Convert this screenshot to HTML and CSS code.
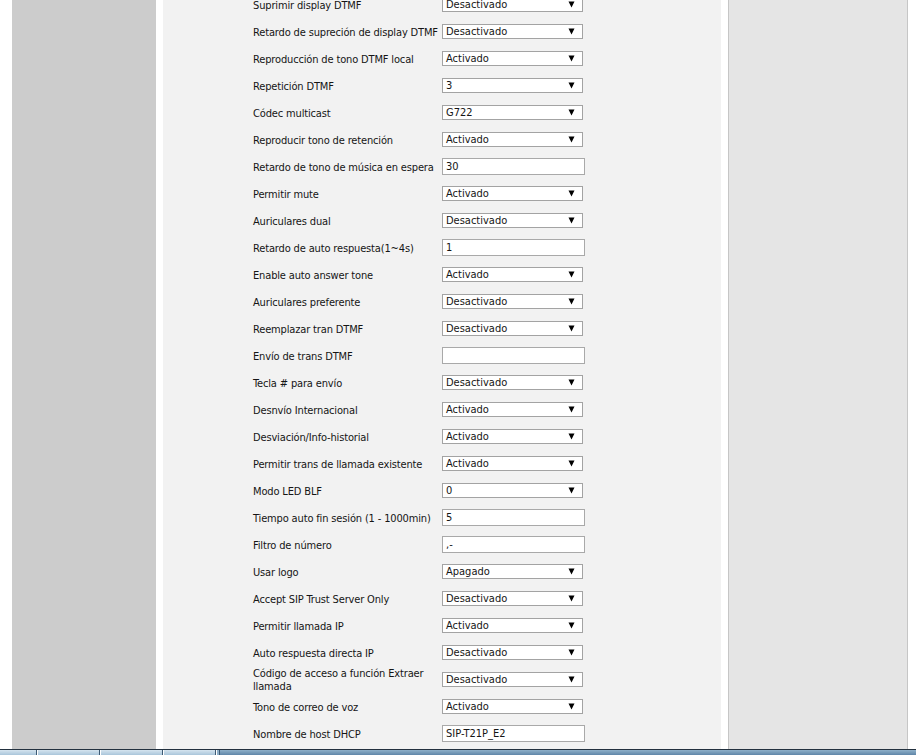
FILE: index.html
```html
<!DOCTYPE html>
<html lang="es">
<head>
<meta charset="utf-8">
<title>Configuración</title>
<link rel="stylesheet" href="styles.css">
</head>
<body>
<div class="page">
  <div class="sidebar"></div>
  <div class="main">
    <div class="form">
      <div class="row"><div class="label">Suprimir display DTMF</div><div class="select"><span>Desactivado</span><svg class="arrow" width="7" height="7" viewBox="0 0 7 7"><path d="M0.5 0.5h6L3.5 6.5z"/></svg></div></div>
      <div class="row"><div class="label">Retardo de supreción de display DTMF</div><div class="select"><span>Desactivado</span><svg class="arrow" width="7" height="7" viewBox="0 0 7 7"><path d="M0.5 0.5h6L3.5 6.5z"/></svg></div></div>
      <div class="row"><div class="label">Reproducción de tono DTMF local</div><div class="select"><span>Activado</span><svg class="arrow" width="7" height="7" viewBox="0 0 7 7"><path d="M0.5 0.5h6L3.5 6.5z"/></svg></div></div>
      <div class="row"><div class="label">Repetición DTMF</div><div class="select"><span>3</span><svg class="arrow" width="7" height="7" viewBox="0 0 7 7"><path d="M0.5 0.5h6L3.5 6.5z"/></svg></div></div>
      <div class="row"><div class="label">Códec multicast</div><div class="select"><span>G722</span><svg class="arrow" width="7" height="7" viewBox="0 0 7 7"><path d="M0.5 0.5h6L3.5 6.5z"/></svg></div></div>
      <div class="row"><div class="label">Reproducir tono de retención</div><div class="select"><span>Activado</span><svg class="arrow" width="7" height="7" viewBox="0 0 7 7"><path d="M0.5 0.5h6L3.5 6.5z"/></svg></div></div>
      <div class="row"><div class="label">Retardo de tono de música en espera</div><div class="input">30</div></div>
      <div class="row"><div class="label">Permitir mute</div><div class="select"><span>Activado</span><svg class="arrow" width="7" height="7" viewBox="0 0 7 7"><path d="M0.5 0.5h6L3.5 6.5z"/></svg></div></div>
      <div class="row"><div class="label">Auriculares dual</div><div class="select"><span>Desactivado</span><svg class="arrow" width="7" height="7" viewBox="0 0 7 7"><path d="M0.5 0.5h6L3.5 6.5z"/></svg></div></div>
      <div class="row"><div class="label">Retardo de auto respuesta(1~4s)</div><div class="input">1</div></div>
      <div class="row"><div class="label">Enable auto answer tone</div><div class="select"><span>Activado</span><svg class="arrow" width="7" height="7" viewBox="0 0 7 7"><path d="M0.5 0.5h6L3.5 6.5z"/></svg></div></div>
      <div class="row"><div class="label">Auriculares preferente</div><div class="select"><span>Desactivado</span><svg class="arrow" width="7" height="7" viewBox="0 0 7 7"><path d="M0.5 0.5h6L3.5 6.5z"/></svg></div></div>
      <div class="row"><div class="label">Reemplazar tran DTMF</div><div class="select"><span>Desactivado</span><svg class="arrow" width="7" height="7" viewBox="0 0 7 7"><path d="M0.5 0.5h6L3.5 6.5z"/></svg></div></div>
      <div class="row"><div class="label">Envío de trans DTMF</div><div class="input"></div></div>
      <div class="row"><div class="label">Tecla # para envío</div><div class="select"><span>Desactivado</span><svg class="arrow" width="7" height="7" viewBox="0 0 7 7"><path d="M0.5 0.5h6L3.5 6.5z"/></svg></div></div>
      <div class="row"><div class="label">Desnvío Internacional</div><div class="select"><span>Activado</span><svg class="arrow" width="7" height="7" viewBox="0 0 7 7"><path d="M0.5 0.5h6L3.5 6.5z"/></svg></div></div>
      <div class="row"><div class="label">Desviación/Info-historial</div><div class="select"><span>Activado</span><svg class="arrow" width="7" height="7" viewBox="0 0 7 7"><path d="M0.5 0.5h6L3.5 6.5z"/></svg></div></div>
      <div class="row"><div class="label">Permitir trans de llamada existente</div><div class="select"><span>Activado</span><svg class="arrow" width="7" height="7" viewBox="0 0 7 7"><path d="M0.5 0.5h6L3.5 6.5z"/></svg></div></div>
      <div class="row"><div class="label">Modo LED BLF</div><div class="select"><span>0</span><svg class="arrow" width="7" height="7" viewBox="0 0 7 7"><path d="M0.5 0.5h6L3.5 6.5z"/></svg></div></div>
      <div class="row"><div class="label">Tiempo auto fin sesión (1 - 1000min)</div><div class="input">5</div></div>
      <div class="row"><div class="label">Filtro de número</div><div class="input">,-</div></div>
      <div class="row"><div class="label">Usar logo</div><div class="select"><span>Apagado</span><svg class="arrow" width="7" height="7" viewBox="0 0 7 7"><path d="M0.5 0.5h6L3.5 6.5z"/></svg></div></div>
      <div class="row"><div class="label">Accept SIP Trust Server Only</div><div class="select"><span>Desactivado</span><svg class="arrow" width="7" height="7" viewBox="0 0 7 7"><path d="M0.5 0.5h6L3.5 6.5z"/></svg></div></div>
      <div class="row"><div class="label">Permitir llamada IP</div><div class="select"><span>Activado</span><svg class="arrow" width="7" height="7" viewBox="0 0 7 7"><path d="M0.5 0.5h6L3.5 6.5z"/></svg></div></div>
      <div class="row"><div class="label">Auto respuesta directa IP</div><div class="select"><span>Desactivado</span><svg class="arrow" width="7" height="7" viewBox="0 0 7 7"><path d="M0.5 0.5h6L3.5 6.5z"/></svg></div></div>
      <div class="row"><div class="label">Código de acceso a función Extraer<br>llamada</div><div class="select"><span>Desactivado</span><svg class="arrow" width="7" height="7" viewBox="0 0 7 7"><path d="M0.5 0.5h6L3.5 6.5z"/></svg></div></div>
      <div class="row"><div class="label">Tono de correo de voz</div><div class="select"><span>Activado</span><svg class="arrow" width="7" height="7" viewBox="0 0 7 7"><path d="M0.5 0.5h6L3.5 6.5z"/></svg></div></div>
      <div class="row"><div class="label">Nombre de host DHCP</div><div class="input">SIP-T21P_E2</div></div>
    </div>
  </div>
  <div class="aside"></div>
</div>
<div class="taskbar">
  <div class="tab t1"></div>
  <div class="tab t2"></div>
  <div class="tab t3"></div>
  <div class="tab t4"></div>
  <div class="tab t5"></div>
  <div class="rest"></div>
</div>
</body>
</html>
```

FILE: styles.css
```css
html, body {
  margin: 0;
  padding: 0;
  background: #ffffff;
}

body {
  font-family: "DejaVu Sans Condensed", "DejaVu Sans", "Liberation Sans", sans-serif;
  font-size: 11px;
  color: #151515;
  overflow: hidden;
  height: 755px;
}

.page {
  display: flex;
  align-items: stretch;
  height: 755px;
  padding-left: 12px;
}

.sidebar {
  width: 144px;
  background: #cccccc;
  flex: none;
}

.main {
  width: 558px;
  margin-left: 7px;
  background: #f2f2f2;
  flex: none;
  overflow: hidden;
}

.form {
  margin-top: -9px;
  padding-left: 90px;
}

.row {
  display: flex;
  align-items: center;
  height: 27px;
}

.label {
  width: 189px;
  flex: none;
  white-space: nowrap;
  line-height: 13px;
  padding-top: 1px;
  letter-spacing: -0.15px;
}

.select {
  width: 141px;
  height: 15px;
  box-sizing: border-box;
  border: 1px solid #a3a3a3;
  background: #ffffff;
  display: flex;
  align-items: center;
  justify-content: space-between;
  padding: 0 7px 0 3px;
  line-height: 13px;
}

.arrow {
  display: block;
  fill: #000000;
}

.input {
  width: 143px;
  height: 17px;
  box-sizing: border-box;
  border: 1px solid #a9a9a9;
  background: #ffffff;
  padding: 0 3px;
  line-height: 15px;
}

.aside {
  width: 178px;
  margin-left: 7px;
  flex: none;
  background: #e5e5e5;
  border-left: 1px solid #c6c6c6;
  border-right: 1px solid #c6c6c6;
}

.taskbar {
  position: fixed;
  left: 0;
  right: 0;
  bottom: 0;
  height: 5px;
  display: flex;
  border-top: 1px solid #23313f;
  background: linear-gradient(#8fb0c9, #5f86a8);
}

.tab {
  height: 100%;
  background: linear-gradient(#d5e4ef, #a9c5da);
  border-right: 1px solid #3d5a74;
  flex: none;
}

.t1 { width: 36px; }
.t2 { width: 61px; border-left: 1px solid #ffffff; }
.t3 { width: 61px; border-left: 1px solid #ffffff; }
.t4 { width: 51px; border-left: 1px solid #ffffff; }
.t5 { width: 2px; border-left: 1px solid #ffffff; background: #8fb0c9; }

.rest {
  flex: 1;
}
```
